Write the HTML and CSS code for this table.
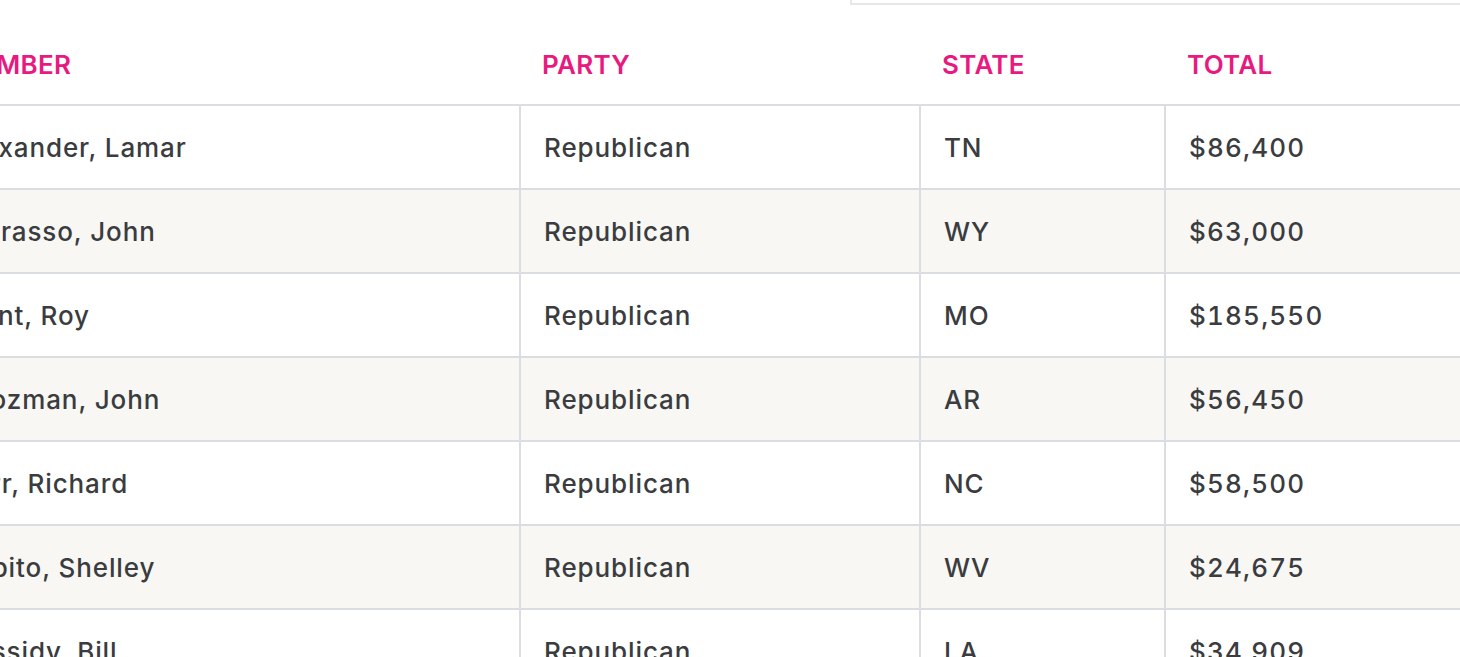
FILE: index.html
```html
<!DOCTYPE html>
<html lang="en">
<head>
<meta charset="utf-8">
<title>Members</title>
<link rel="stylesheet" href="styles.css">
</head>
<body>
<div class="toolbar">
  <div class="search-box"></div>
</div>
<table class="members">
  <colgroup>
    <col class="c-member">
    <col class="c-party">
    <col class="c-state">
    <col class="c-total">
  </colgroup>
  <thead>
    <tr><th>Member</th><th>Party</th><th>State</th><th>Total</th></tr>
  </thead>
  <tbody>
    <tr><td>Alexander, Lamar</td><td>Republican</td><td>TN</td><td class="money">$86,400</td></tr>
    <tr><td>Barrasso, John</td><td>Republican</td><td>WY</td><td class="money">$63,000</td></tr>
    <tr><td>Blunt, Roy</td><td>Republican</td><td>MO</td><td class="money">$185,550</td></tr>
    <tr><td>Boozman, John</td><td>Republican</td><td>AR</td><td class="money">$56,450</td></tr>
    <tr><td>Burr, Richard</td><td>Republican</td><td>NC</td><td class="money">$58,500</td></tr>
    <tr><td>Capito, Shelley</td><td>Republican</td><td>WV</td><td class="money">$24,675</td></tr>
    <tr><td>Cassidy, Bill</td><td>Republican</td><td>LA</td><td class="money">$34,909</td></tr>
    <tr><td>Cochran, Thad</td><td>Republican</td><td>MS</td><td class="money">$41,200</td></tr>
  </tbody>
</table>
</body>
</html>
```

FILE: styles.css
```css
html, body {
  margin: 0;
  padding: 0;
  background: #ffffff;
  overflow: hidden;
}

body {
  font-family: Inter, "Liberation Sans", sans-serif;
  color: #3a3c40;
}

.toolbar {
  display: flex;
  justify-content: flex-end;
  height: 5px;
}

.search-box {
  width: 640px;
  margin-right: -32px;
  height: 3px;
  border-left: 2px solid #e7e7e7;
  border-bottom: 2px solid #e7e7e7;
}

.members {
  table-layout: fixed;
  border-collapse: separate;
  border-spacing: 0;
  width: 1566px;
  margin-left: -67px;
}

.c-member { width: 586px; }
.c-party { width: 400px; }
.c-state { width: 245px; }
.c-total { width: 335px; }

.members th {
  text-align: left;
  font-weight: 600;
  font-size: 26px;
  line-height: 32px;
  text-transform: uppercase;
  color: #e8197f;
  padding: 44px 23px 23px 23px;
  letter-spacing: 0.3px;
}

.members td {
  font-size: 26px;
  font-weight: 500;
  line-height: 32px;
  padding: 26px 23px 24px 23px;
  border-top: 2px solid #dadde1;
  letter-spacing: 0.9px;
  white-space: nowrap;
  overflow: hidden;
}

.members td.money {
  font-variant-numeric: tabular-nums;
  letter-spacing: 1.2px;
}

.members td + td {
  border-left: 2px solid #dadde1;
}

.members tbody tr:nth-child(even) td {
  background: #f8f7f3;
}
```
